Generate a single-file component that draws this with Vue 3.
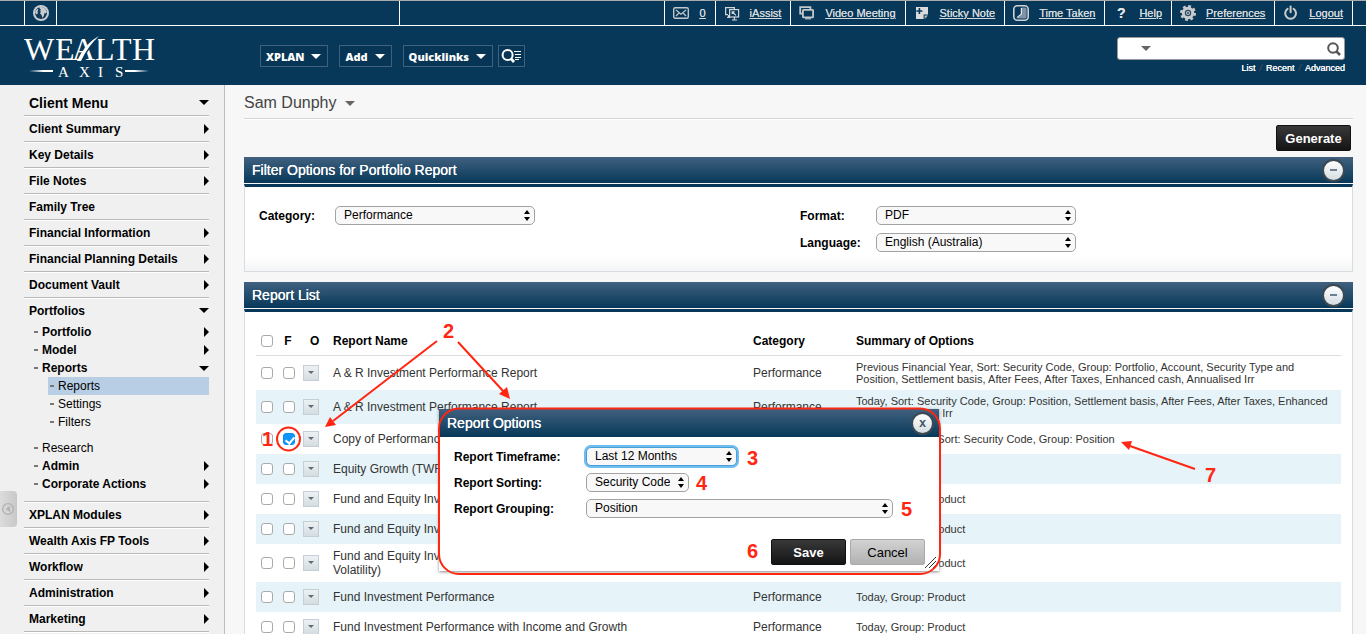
<template>
  <div class="app">
    <header class="header">
      <nav class="topbar">
        <a href="#" class="globe" aria-label="Sites">
          <svg width="16" height="16" viewBox="0 0 16 16">
            <circle cx="8" cy="8" r="8" fill="#c9cdd1"/>
            <circle cx="8" cy="8" r="6" fill="#123a58"/>
            <path d="M6 2.2 Q9 1.4 12 3.4 L14 7 L12.6 8.4 L11.4 8 L11 10.6 L9.6 13 L8.6 10 L7 8.4 L8 6.6 L6.6 6 L8.2 4.8 L7 4 Z" fill="#c9cdd1"/>
            <path d="M2.4 6 L4.2 4 L5.4 4.6 L4.4 6.4 L5 8 L3.6 9.4 L2.2 8 Z" fill="#c9cdd1"/>
          </svg>
        </a>
        <span class="topbar-cell"></span>
        <span class="topbar-fill"></span>
        <a v-for="item in topLinks" :key="item.label" href="#" class="top-link">
          <svg width="16" height="16" viewBox="0 0 16 16">
            <g v-if="item.icon === 'mail'" fill="none" stroke="#c4c7c9">
              <rect x="0.7" y="2.7" width="14.6" height="10.6" rx="1.5" stroke-width="1.4"/>
              <path d="M3 5 L8 9.2 L13 5 M3 11 L6 8 M13 11 L10 8" stroke-width="1.2"/>
            </g>
            <g v-else-if="item.icon === 'assist'" fill="none" stroke="#d3d5d7" stroke-width="1.2">
              <path d="M4 9.6 H1.6 V2.6 H10.4 V4 M3 12.4 H6 M4.6 10 V12"/>
              <rect x="5.6" y="4.6" width="9" height="7.4"/>
              <path d="M8 15 H13 M10.4 12 V15 M8.2 9 V6.8 H10.6 M8.4 7 L12 10.4"/>
            </g>
            <g v-else-if="item.icon === 'video'" fill="none" stroke="#c4c7c9">
              <path d="M3 8.6 H1.2 V2.2 H11.4 V4" stroke-width="1.8"/>
              <rect x="3.9" y="4.9" width="10.2" height="7.4" rx="0.6" stroke-width="1.8"/>
              <path d="M6 13.8 H12" stroke-width="1.2"/>
            </g>
            <g v-else-if="item.icon === 'note'">
              <path d="M2 2 H14 V9.6 H9.6 V14 H2 Z" fill="#d9dbdc"/>
              <path d="M10.6 10.6 H14 L10.6 14 Z" fill="#b7bcc0"/>
              <path d="M5.4 3 V9 M2.4 6 H8.4" stroke="#083859" stroke-width="1.6"/>
            </g>
            <g v-else-if="item.icon === 'time'">
              <rect x="0.8" y="0.8" width="14.4" height="14.4" rx="3.5" fill="none" stroke="#d0d3d6" stroke-width="1.6"/>
              <path d="M8.4 2.4 H12 Q13.6 2.4 13.6 4 V12 Q13.6 13.6 12 13.6 H4 L8.4 9 Z" fill="#7e93a5"/>
              <path d="M8.4 3 V9 L4 12.6" fill="none" stroke="#e4e6e8" stroke-width="1.2"/>
            </g>
            <text v-else-if="item.icon === 'help'" x="4" y="13" class="help-mark">?</text>
            <g v-else-if="item.icon === 'gear'">
              <circle cx="8" cy="8" r="6.2" fill="#c9cccd"/>
              <circle cx="8" cy="8" r="6.8" fill="none" stroke="#c9cccd" stroke-width="2.4" stroke-dasharray="2.8 2.54"/>
              <circle cx="8" cy="8" r="2.6" fill="none" stroke="#254a66" stroke-width="1.2"/>
              <circle cx="8" cy="8" r="1" fill="#254a66"/>
            </g>
            <g v-else fill="none" stroke="#c9cccd" stroke-width="2" stroke-linecap="round">
              <path d="M4.6 3.8 A5.4 5.4 0 1 0 10.6 3.8"/>
              <path d="M7.6 1.6 V7.2"/>
            </g>
          </svg>
          <span>{{ item.label }}</span>
        </a>
        <span class="topbar-end"></span>
      </nav>

      <div class="brandbar">
        <svg class="logo" width="134" height="46" viewBox="0 0 134 46">
          <defs>
            <linearGradient id="fadeL"><stop offset="0" stop-color="#fff" stop-opacity="0"/><stop offset="0.6" stop-color="#fff"/></linearGradient>
            <linearGradient id="fadeR"><stop offset="0.4" stop-color="#fff"/><stop offset="1" stop-color="#fff" stop-opacity="0"/></linearGradient>
          </defs>
          <text x="0 31 48 71 88 108" y="26" class="logo-name">WEALTH</text>
          <path d="M56 27 Q64 11 75 2" fill="none" stroke="#073859" stroke-width="4"/>
          <path d="M53 27 Q61 9 75 2 Q64 12 57 27 Z" fill="#fff"/>
          <text x="34 55 74 91" y="43" class="logo-sub">AXIS</text>
          <rect x="5" y="36" width="24" height="2" fill="url(#fadeL)"/>
          <rect x="101" y="36" width="24" height="2" fill="url(#fadeR)"/>
        </svg>
        <div class="actions">
          <button v-for="name in quickMenus" :key="name" type="button" class="menu-button">{{ name }}<i class="caret"></i></button>
          <button type="button" class="menu-button find" aria-label="Find">
            <svg width="21" height="16" viewBox="0 0 21 16" fill="none" stroke="#fff">
              <circle cx="6.6" cy="7" r="5" stroke-width="2"/>
              <path d="M10 10.6 L13 14" stroke-width="2.8"/>
              <path d="M13 3.5 H20 M14 6.5 H20 M14 9.5 H20 M14 11.5 H18" stroke-width="1.2"/>
            </svg>
          </button>
        </div>
        <div class="search">
          <div class="search-box">
            <i class="caret dim"></i>
            <input type="text" aria-label="Search">
            <button type="button" aria-label="Search">
              <svg width="14" height="14" viewBox="0 0 14 14" fill="none" stroke="#555">
                <circle cx="6" cy="6" r="4.8" stroke-width="2"/>
                <path d="M9.4 9.4 L13 13" stroke-width="2.6"/>
              </svg>
            </button>
          </div>
          <div class="search-links">
            <a href="#">List</a><i>/</i><a href="#">Recent</a><i>/</i><a href="#">Advanced</a>
          </div>
        </div>
      </div>
    </header>

    <div class="body">
      <aside class="sidebar">
        <button type="button" class="handle" aria-label="Collapse menu">
          <svg width="14" height="14" viewBox="0 0 14 14">
            <circle cx="7" cy="7" r="5.4" fill="none" stroke="#b3b3b3" stroke-width="1.4"/>
            <path d="M9 4 V10 L4.6 7 Z" fill="#b3b3b3"/>
          </svg>
        </button>
        <ul class="menu">
          <li v-for="item in menu" :key="item.label" class="menu-item">
            <a href="#" :class="{ heading: item.heading }">{{ item.label }}<i v-if="item.arrow" :class="item.arrow"></i></a>
            <ul v-if="item.children" class="submenu">
              <li v-for="child in item.children" :key="child.label">
                <a href="#" :class="{ plain: !child.arrow }"><b class="dash"></b>{{ child.label }}<i v-if="child.arrow" :class="child.arrow"></i></a>
                <ul v-if="child.children" class="leaves">
                  <li v-for="leaf in child.children" :key="leaf">
                    <a href="#" class="plain" :class="{ active: leaf === activePage }"><b class="dash"></b>{{ leaf }}</a>
                  </li>
                </ul>
              </li>
            </ul>
          </li>
        </ul>
      </aside>

      <main class="main">
        <h1 class="client">Sam Dunphy<i class="caret dim"></i></h1>
        <div class="toolbar"><button type="button" class="btn dark">Generate</button></div>

        <section class="panel">
          <h2 class="panel-title">Filter Options for Portfolio Report<button type="button" class="round" aria-label="Collapse"><i class="minus"></i></button></h2>
          <div class="panel-body filters">
            <div class="field">
              <label for="category">Category:</label>
              <span class="select"><select id="category"><option>Performance</option></select><svg width="8" height="11" viewBox="0 0 8 11"><path d="M4 0 L7 4 H1 Z M4 11 L7 7 H1 Z"/></svg></span>
            </div>
            <div class="field-group">
              <div class="field">
                <label for="format">Format:</label>
                <span class="select"><select id="format"><option>PDF</option></select><svg width="8" height="11" viewBox="0 0 8 11"><path d="M4 0 L7 4 H1 Z M4 11 L7 7 H1 Z"/></svg></span>
              </div>
              <div class="field">
                <label for="language">Language:</label>
                <span class="select"><select id="language"><option>English (Australia)</option></select><svg width="8" height="11" viewBox="0 0 8 11"><path d="M4 0 L7 4 H1 Z M4 11 L7 7 H1 Z"/></svg></span>
              </div>
            </div>
          </div>
        </section>

        <section class="panel">
          <h2 class="panel-title">Report List<button type="button" class="round" aria-label="Collapse"><i class="minus"></i></button></h2>
          <div class="panel-body list">
            <table>
              <colgroup>
                <col class="c-pick"><col class="c-fav"><col class="c-opt"><col class="c-name"><col class="c-cat"><col>
              </colgroup>
              <thead>
                <tr>
                  <th><input type="checkbox" aria-label="Select all"></th>
                  <th class="center">F</th>
                  <th class="opt">O</th>
                  <th>Report Name</th>
                  <th>Category</th>
                  <th>Summary of Options</th>
                </tr>
              </thead>
              <tbody>
                <tr v-for="(row, i) in reports" :key="i">
                  <td><input type="checkbox" :aria-label="'Select ' + row.name"></td>
                  <td><input v-model="row.fav" type="checkbox" :aria-label="'Favourite ' + row.name"></td>
                  <td><button type="button" class="opt-button" aria-label="Options" @click="dialogOpen = true"><i></i></button></td>
                  <td>{{ row.name }}</td>
                  <td>Performance</td>
                  <td class="summary">{{ row.summary }}</td>
                </tr>
              </tbody>
            </table>
          </div>
        </section>
      </main>
    </div>

    <div v-if="dialogOpen" class="dialog" role="dialog" aria-labelledby="dialogTitle">
      <h2 id="dialogTitle" class="dialog-title">Report Options<button type="button" class="round" aria-label="Close" @click="dialogOpen = false">x</button></h2>
      <form class="dialog-form" @submit.prevent="dialogOpen = false">
        <div v-for="opt in dialogFields" :key="opt.id" class="field">
          <label :for="opt.id">{{ opt.label }}</label>
          <span class="select" :class="opt.id"><select :id="opt.id"><option>{{ opt.value }}</option></select><svg width="8" height="11" viewBox="0 0 8 11"><path d="M4 0 L7 4 H1 Z M4 11 L7 7 H1 Z"/></svg></span>
        </div>
        <div class="dialog-buttons">
          <button type="submit" class="btn dark">Save</button>
          <button type="button" class="btn light" @click="dialogOpen = false">Cancel</button>
        </div>
      </form>
      <svg class="grip" width="14" height="14" viewBox="0 0 14 14" stroke="#333"><path d="M1 13 L12 2 M5 13 L12 6 M9 13 L12 10"/></svg>
    </div>

    <!-- numbered steps drawn over the page -->
    <svg class="notes" width="1366" height="634" viewBox="0 0 1366 634">
      <rect x="439" y="408.5" width="501" height="165.5" rx="20" fill="none" stroke="#ff2612" stroke-width="2"/>
      <circle cx="288.5" cy="439" r="11.5" fill="none" stroke="#ff2612" stroke-width="2"/>
      <g stroke="#ff2612" stroke-width="2">
        <path d="M437 341 L333 421"/>
        <path d="M458 342 L504 392"/>
        <path d="M1195 469 L1130 446"/>
      </g>
      <g fill="#ff2612">
        <path d="M325 427 L330 417 L336 425 Z"/>
        <path d="M510 399 L499 394 L507 387 Z"/>
        <path d="M1121 442 L1132 441 L1129 450 Z"/>
        <text v-for="n in notes" :key="n.text" :x="n.x" :y="n.y">{{ n.text }}</text>
      </g>
    </svg>
  </div>
</template>

<script setup>
import { ref } from 'vue'

const topLinks = [
  { label: '0', icon: 'mail' },
  { label: 'iAssist', icon: 'assist' },
  { label: 'Video Meeting', icon: 'video' },
  { label: 'Sticky Note', icon: 'note' },
  { label: 'Time Taken', icon: 'time' },
  { label: 'Help', icon: 'help' },
  { label: 'Preferences', icon: 'gear' },
  { label: 'Logout', icon: 'power' }
]

const quickMenus = ['XPLAN', 'Add', 'Quicklinks']

const activePage = ref('Reports')

const menu = [
  { label: 'Client Menu', arrow: 'down', heading: true },
  { label: 'Client Summary', arrow: 'right' },
  { label: 'Key Details', arrow: 'right' },
  { label: 'File Notes', arrow: 'right' },
  { label: 'Family Tree' },
  { label: 'Financial Information', arrow: 'right' },
  { label: 'Financial Planning Details', arrow: 'right' },
  { label: 'Document Vault', arrow: 'right' },
  {
    label: 'Portfolios',
    arrow: 'down',
    children: [
      { label: 'Portfolio', arrow: 'right' },
      { label: 'Model', arrow: 'right' },
      { label: 'Reports', arrow: 'down', children: ['Reports', 'Settings', 'Filters'] },
      { label: 'Research' },
      { label: 'Admin', arrow: 'right' },
      { label: 'Corporate Actions', arrow: 'right' }
    ]
  },
  { label: 'XPLAN Modules', arrow: 'right' },
  { label: 'Wealth Axis FP Tools', arrow: 'right' },
  { label: 'Workflow', arrow: 'right' },
  { label: 'Administration', arrow: 'right' },
  { label: 'Marketing', arrow: 'right' }
]

const reports = ref([
  { name: 'A & R Investment Performance Report', summary: 'Previous Financial Year, Sort: Security Code, Group: Portfolio, Account, Security Type and Position, Settlement basis, After Fees, After Taxes, Enhanced cash, Annualised Irr', fav: false },
  { name: 'A & R Investment Performance Report', summary: 'Today, Sort: Security Code, Group: Position, Settlement basis, After Fees, After Taxes, Enhanced cash, Annualised Irr', fav: false },
  { name: 'Copy of Performance Report', summary: 'Last 12 Months, Sort: Security Code, Group: Position', fav: true },
  { name: 'Equity Growth (TWR)', summary: 'Today', fav: false },
  { name: 'Fund and Equity Investment Performance', summary: 'Today, Group: Product', fav: false },
  { name: 'Fund and Equity Investment Performance', summary: 'Today, Group: Product', fav: false },
  { name: 'Fund and Equity Investment Performance (with Income, Growth and Volatility)', summary: 'Today, Group: Product', fav: false },
  { name: 'Fund Investment Performance', summary: 'Today, Group: Product', fav: false },
  { name: 'Fund Investment Performance with Income and Growth', summary: 'Today, Group: Product', fav: false }
])

const dialogOpen = ref(true)

const dialogFields = [
  { id: 'timeframe', label: 'Report Timeframe:', value: 'Last 12 Months' },
  { id: 'sorting', label: 'Report Sorting:', value: 'Security Code' },
  { id: 'grouping', label: 'Report Grouping:', value: 'Position' }
]

const notes = [
  { text: '1', x: 262, y: 446 },
  { text: '2', x: 443, y: 338 },
  { text: '3', x: 747, y: 465 },
  { text: '4', x: 696, y: 490 },
  { text: '5', x: 901, y: 516 },
  { text: '6', x: 747, y: 558 },
  { text: '7', x: 1205, y: 482 }
]
</script>

<style>
body {
  background: #f7f7f7;
}
</style>

<style scoped>
.app {
  position: relative;
  height: 100vh;
  overflow: hidden;
  display: flex;
  flex-direction: column;
  font-family: 'Liberation Sans', Arial, sans-serif;
  font-size: 12px;
  color: #333;
}

.app * {
  box-sizing: border-box;
}

button,
input,
select {
  font-family: inherit;
  margin: 0;
}

ul {
  list-style: none;
  margin: 0;
  padding: 0;
}

a {
  color: inherit;
  text-decoration: none;
}

.caret {
  width: 0;
  height: 0;
  border: 5px solid transparent;
  border-top-color: #fff;
  border-bottom-width: 0;
}

.caret.dim {
  border-top-color: #666;
}

/* header */
.header {
  flex: none;
  background: #073859;
  border-top: 1px solid #aaa;
  color: #fff;
}

.topbar {
  display: flex;
  height: 25px;
  border-bottom: 1px solid #fff;
}

.globe {
  display: flex;
  align-items: center;
  justify-content: center;
  width: 33px;
  margin-left: 24px;
  border-left: 1px solid #fff;
  border-right: 1px solid #fff;
}

.topbar-cell {
  width: 343px;
  border-right: 1px solid #fff;
}

.topbar-fill {
  flex: 1;
}

.top-link {
  display: flex;
  align-items: center;
  gap: 10px;
  padding: 0 9px 0 8px;
  border-left: 1px solid #fff;
  font-size: 11px;
  color: #d5d9dc;
  text-decoration: underline;
  text-shadow: 0 0 0 #d5d9dc;
}

.topbar-end {
  width: 14px;
  border-left: 1px solid #fff;
}

.help-mark {
  font-size: 14px;
  font-weight: bold;
  fill: #e6e6e6;
}

.brandbar {
  display: flex;
  height: 59px;
  padding-right: 21px;
}

.logo {
  flex: none;
  margin: 8px 0 0 24px;
}

.logo text {
  font-family: 'Liberation Serif', 'Times New Roman', serif;
  fill: #fff;
}

.logo-name {
  font-size: 32px;
}

.logo-sub {
  font-size: 15px;
}

.actions {
  display: flex;
  align-items: flex-start;
  gap: 11px;
  margin: 19px 0 0 102px;
}

.menu-button {
  display: flex;
  align-items: center;
  gap: 7px;
  height: 22px;
  padding: 0 6px 0 5px;
  border: 1px solid #41607c;
  background: #073555;
  color: #fff;
  font-family: 'Open Sans', Verdana, sans-serif;
  font-size: 11px;
  font-weight: 800;
}

.menu-button.find {
  padding: 0 2px;
  margin-left: -6px;
}

.search {
  width: 228px;
  margin: 11px 0 0 auto;
}

.search-box {
  display: flex;
  align-items: center;
  height: 23px;
  padding: 0 3px 0 23px;
  background: #fff;
  border: 1px solid #999;
  border-radius: 3px;
}

.search-box input {
  flex: 1;
  min-width: 0;
  border: 0;
  outline: 0;
  background: none;
}

.search-box button {
  display: flex;
  padding: 0;
  border: 0;
  background: none;
}

.search-links {
  display: flex;
  justify-content: flex-end;
  gap: 4px;
  margin-top: 3px;
  font-size: 9px;
  line-height: 10px;
  text-shadow: 0 0 0 #fff;
}

.search-links i {
  color: #4a5560;
  text-shadow: none;
}

/* side menu */
.body {
  flex: 1;
  min-height: 0;
  display: flex;
}

.sidebar {
  position: relative;
  flex: none;
  width: 225px;
  padding: 5px 15px 0 24px;
  background: #f0f0f0;
  border-right: 1px solid #bdbdc1;
}

.handle {
  position: absolute;
  left: 0;
  top: 406px;
  display: flex;
  align-items: center;
  width: 17px;
  height: 36px;
  padding: 0 1px;
  border: 0;
  border-radius: 0 4px 4px 0;
  background: linear-gradient(to right, #dcdcdc, #c8c8c8);
}

.menu-item {
  border-bottom: 1px solid #b9b9b9;
  box-shadow: 0 1px 0 #fff;
}

.menu a {
  display: flex;
  align-items: center;
  color: #000;
  font-weight: bold;
}

.menu-item > a {
  height: 25px;
  padding-left: 5px;
}

.menu a.heading {
  font-size: 14px;
}

.menu i {
  margin-left: auto;
  border: 5px solid transparent;
}

.menu i.right {
  border-left-color: #000;
  border-right-width: 0;
}

.menu i.down {
  border-top-color: #000;
  border-bottom-width: 0;
}

.submenu {
  padding-bottom: 8px;
}

.submenu a {
  height: 18px;
  padding-left: 10px;
}

.menu a.plain {
  font-weight: normal;
}

.dash {
  width: 4px;
  height: 2px;
  margin-right: 4px;
  background: #777;
}

.leaves {
  padding: 0 0 8px 24px;
}

.leaves a {
  padding-left: 2px;
}

.leaves a.active {
  background: #b8cee4;
}

/* content */
.main {
  flex: 1;
  min-width: 0;
  padding: 0 13px 0 19px;
}

.client {
  display: flex;
  align-items: center;
  gap: 8px;
  height: 34px;
  margin: 0;
  padding-top: 3px;
  border-bottom: 1px solid #d5d5d5;
  box-shadow: 0 1px 0 #fff;
  font-size: 16px;
  font-weight: normal;
  color: #444;
}

.toolbar {
  display: flex;
  justify-content: flex-end;
  padding: 6px 2px;
}

.btn {
  width: 75px;
  height: 26px;
  padding: 0;
  border-radius: 2px;
  font-size: 13px;
}

.btn.dark {
  border: 1px solid #111;
  background: linear-gradient(#383838, #141414);
  color: #fff;
  font-weight: bold;
}

.btn.light {
  border: 1px solid #aaa;
  background: linear-gradient(#d2d2d2, #b2b2b2);
  color: #000;
}

.panel {
  margin-bottom: 10px;
}

.panel-title,
.dialog-title {
  display: flex;
  align-items: center;
  justify-content: space-between;
  height: 26px;
  margin: 0;
  padding: 0 8px;
  background: linear-gradient(#41617f, #073859);
  font-size: 14px;
  font-weight: normal;
  color: #fff;
  text-shadow: 0 0 0 #fff;
}

.round {
  display: flex;
  align-items: center;
  justify-content: center;
  width: 23px;
  height: 23px;
  padding: 0;
  border: 2px solid #3b4852;
  border-radius: 50%;
  background: linear-gradient(#fff, #d3dde2);
  color: #435260;
  font-size: 12px;
  font-weight: bold;
}

.minus {
  width: 7px;
  height: 2px;
  background: #6c8092;
}

.panel-body {
  margin-top: 1px;
  border: 1px solid #d9dde0;
  border-top: 3px solid #073859;
  background: linear-gradient(to top, #f3f4f5, #fff 14px);
}

.filters {
  display: grid;
  grid-template-columns: 1fr 1fr;
  align-items: start;
  padding: 19px 11px 19px 14px;
}

.field-group {
  display: grid;
  gap: 8px;
}

.field {
  display: flex;
  align-items: center;
  color: #000;
}

.field label {
  width: 76px;
  font-weight: bold;
}

.select {
  position: relative;
  display: inline-flex;
  width: 200px;
}

.select select {
  appearance: none;
  width: 100%;
  height: 19px;
  padding: 0 18px 2px 8px;
  border: 1px solid #a3a3a3;
  border-radius: 5px;
  background: #f8f8f8;
  color: #000;
  font-size: 12px;
}

.select svg {
  position: absolute;
  right: 4px;
  top: 4px;
  pointer-events: none;
}

.list {
  padding: 15px 11px;
}

table {
  width: 100%;
  table-layout: fixed;
  border-collapse: collapse;
}

.c-pick { width: 22px; }
.c-fav { width: 20px; }
.c-opt { width: 30px; }
.c-name { width: 420px; }
.c-cat { width: 103px; }

th {
  height: 28px;
  padding: 0 5px;
  border-bottom: 1px solid #ddd;
  text-align: left;
  color: #000;
}

th.center {
  padding: 0;
  text-align: center;
}

th.opt {
  padding-left: 12px;
}

td {
  height: 30px;
  padding: 5px;
  line-height: 14px;
  vertical-align: middle;
}

td.summary {
  font-size: 11px;
  line-height: 12px;
}

tbody tr:nth-child(even) {
  background: #e6f3f8;
}

input[type='checkbox'] {
  appearance: none;
  display: block;
  width: 12px;
  height: 12px;
  border: 1px solid #aaa;
  border-radius: 3px;
  background: #fff;
}

input[type='checkbox']:checked {
  border-color: #0b8df0;
  background: #0f96fa;
}

input[type='checkbox']:checked::after {
  content: '';
  display: block;
  width: 4px;
  height: 7px;
  margin: 1px 3px;
  border: solid #fff;
  border-width: 0 2px 2px 0;
  transform: rotate(40deg);
}

.opt-button {
  display: flex;
  align-items: center;
  justify-content: center;
  width: 16px;
  height: 16px;
  padding: 0;
  border: 1px solid #c5ced4;
  background: linear-gradient(#edf1f3, #d5dde2);
}

.opt-button i {
  border: 3px solid transparent;
  border-top-color: #5d6b77;
  border-bottom-width: 0;
}

/* options dialog */
.dialog {
  position: absolute;
  left: 439px;
  top: 409px;
  width: 500px;
  background: #fff;
  box-shadow: 0 1px 3px #888;
}

.dialog-title {
  height: 28px;
  padding: 0 5px 0 8px;
}

.dialog-form {
  display: grid;
  gap: 7px;
  padding: 10px 14px 6px 15px;
}

.dialog-form label {
  width: 132px;
}

.select.timeframe {
  width: 151px;
}

.select.timeframe select {
  border-color: #4a9fd8;
  box-shadow: 0 0 0 2px #6fbdf0;
}

.select.sorting {
  width: 103px;
}

.select.grouping {
  width: 307px;
}

.dialog-buttons {
  display: flex;
  justify-content: flex-end;
  gap: 4px;
  padding-top: 14px;
}

.grip {
  position: absolute;
  right: 1px;
  bottom: 2px;
}

.notes {
  position: absolute;
  left: 0;
  top: 0;
  pointer-events: none;
}

.notes text {
  font-size: 20px;
  font-weight: bold;
}
</style>
